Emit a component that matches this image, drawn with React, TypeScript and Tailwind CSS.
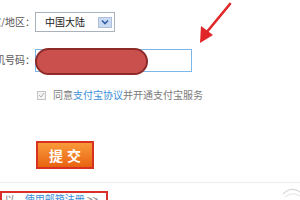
export default function App() {
  return (
    <div className="relative w-[300px] h-[200px] overflow-hidden bg-white font-['Noto_Sans_CJK_SC',sans-serif]">
      <div className="flex flex-col">
        {/* country / region */}
        <div className="mt-[12px] flex items-center h-[20px]">
          <div className="w-[35px] overflow-hidden flex justify-end whitespace-nowrap text-[10px] leading-none text-[#555]">
            国家/地区：
          </div>
          <div className="w-[80px] h-[20px] border border-[#a9b1bb] bg-white flex items-center justify-between pl-[9px] pr-[2px]">
            <span className="text-[10px] leading-none text-[#222]">中国大陆</span>
            <span className="w-[14px] h-[11px] bg-[#c9daf2] border border-[#aebfd9] flex items-center justify-center">
              <svg width="8" height="6" viewBox="0 0 8 6">
                <path d="M1 1.5 L4 4.5 L7 1.5" fill="none" stroke="#2f5fa8" strokeWidth="1.6" />
              </svg>
            </span>
          </div>
        </div>

        {/* mobile number */}
        <div className="mt-[16px] flex items-center h-[24px]">
          <div className="w-[35px] overflow-hidden flex justify-end whitespace-nowrap text-[10px] leading-none text-[#555]">
            手机号码：
          </div>
          <div className="relative w-[157px] h-[23px] border border-[#7fb6ea] bg-white">
            <div className="absolute left-[-1px] top-[-2px] w-[113px] h-[27px] rounded-full bg-[#c9504d] border-2 border-[#8e2b29]" />
          </div>
        </div>

        {/* agreement */}
        <div className="mt-[18px] ml-[37px] flex items-center gap-[7px] whitespace-nowrap">
          <span className="w-[9px] h-[9px] border border-[#c4c4c4] bg-[#f4f4f4] flex items-center justify-center">
            <svg width="7" height="6" viewBox="0 0 7 6">
              <path d="M1 3 L3 5 L6 1" fill="none" stroke="#b0b0b0" strokeWidth="1" />
            </svg>
          </span>
          <span className="text-[10px] leading-none text-[#7a7a7a]">
            同意<span className="text-[#3d8ed8]">支付宝协议</span>并开通支付宝服务
          </span>
        </div>

        {/* submit */}
        <div className="mt-[41px] ml-[36px]">
          <button className="w-[58px] h-[28px] border-2 border-[#d7321f] bg-gradient-to-b from-[#f99a3a] to-[#e8620f] text-white text-[14px] font-bold leading-none tracking-[4px] pl-[4px]">
            提交
          </button>
        </div>

        {/* divider */}
        <div className="mt-[13px] h-px bg-[#ececec]" />

        {/* email link */}
        <div className="mt-[8px] w-[108px] h-[14px] border-2 border-[#d8302a] flex items-start overflow-hidden whitespace-nowrap justify-end pr-[8px]">
          <span className="text-[10px] leading-none text-[#777] pt-[1px]">
            以，<span className="text-[#3d8ed8]">使用邮箱注册</span> &gt;&gt;
          </span>
        </div>
      </div>

      {/* pointer arrow */}
      <svg className="absolute left-[195px] top-0" width="40" height="46" viewBox="0 0 40 46">
        <path d="M35 4 L11 33" stroke="#e02626" strokeWidth="2.6" strokeLinecap="round" />
        <path d="M5 43 L6 26 L18 35 Z" fill="#e02626" />
      </svg>

      {/* faint corner mark */}
      <svg className="absolute left-[280px] top-[186px]" width="22" height="16" viewBox="0 0 22 16">
        <path d="M3 8 Q11 0 20 6" fill="none" stroke="#d8d8d8" strokeWidth="1.2" />
        <path d="M5 11 Q12 5 20 10" fill="none" stroke="#e2e2e2" strokeWidth="1" />
      </svg>
    </div>
  );
}
